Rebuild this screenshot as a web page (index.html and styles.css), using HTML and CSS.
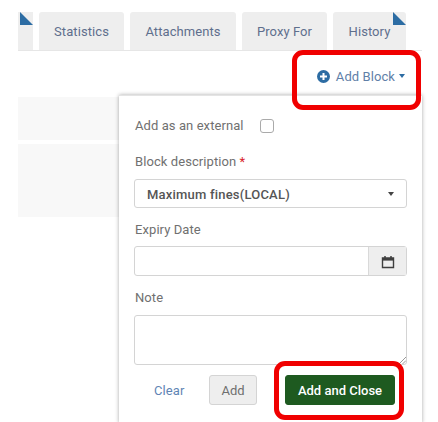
FILE: index.html
```html
<!DOCTYPE html>
<html lang="en">

<head>
    <meta charset="UTF-8">
    <title>Add Block</title>
    <link rel="stylesheet" href="styles.css">
</head>

<body>
    <div class="page">
        <div class="tabs">
            <div class="tab tab-stub"><span class="corner"></span></div>
            <div class="tab tab-stats">Statistics</div>
            <div class="tab tab-attach">Attachments</div>
            <div class="tab tab-proxy">Proxy For</div>
            <div class="tab tab-history">History<span class="corner"></span></div>
        </div>

        <div class="actions">
            <a class="add-block">
                <svg class="plus" viewBox="0 0 13 13" width="13" height="13">
                    <circle cx="6.5" cy="6.5" r="6.5" fill="#2c6ca3" />
                    <path d="M6.5 3v7M3 6.500h7" stroke="#fff" stroke-width="2" />
                </svg>
                Add Block
                <span class="caret caret-blue"></span>
            </a>
        </div>

        <div class="row-bg row-one"></div>
        <div class="row-bg row-two"></div>

        <div class="popover">
            <div class="external">
                <span class="label">Add as an external</span>
                <span class="checkbox"></span>
            </div>

            <div class="label desc-label">Block description <span class="required">*</span></div>
            <div class="select">
                <span>Maximum fines(LOCAL)</span>
                <span class="caret"></span>
            </div>

            <div class="label expiry-label">Expiry Date</div>
            <div class="date-field">
                <div class="date-input"></div>
                <div class="date-btn">
                    <svg viewBox="0 0 14 14" width="14" height="14">
                        <path d="M1.5 3h11v9.5h-11z" fill="none" stroke="#3f3f3f" stroke-width="1.4" />
                        <path d="M1.5 3h11v2.6h-11z" fill="#3f3f3f" />
                        <path d="M4 1v2.5M10 1v2.5" stroke="#3f3f3f" stroke-width="1.5" />
                    </svg>
                </div>
            </div>

            <div class="label note-label">Note</div>
            <div class="note">
                <svg class="grip" viewBox="0 0 8 8" width="8" height="8">
                    <path d="M1 8l7-7M4.5 8l3.500-3.500" stroke="#999" stroke-width="1" />
                </svg>
            </div>

            <div class="buttons">
                <a class="clear">Clear</a>
                <button class="btn">Add</button>
                <button class="btn btn-primary">Add and Close</button>
            </div>
        </div>

        <div class="highlight highlight-top"></div>
        <div class="highlight highlight-bottom"></div>
    </div>
</body>

</html>
```

FILE: styles.css
```css
html,
body {
    margin: 0;
    height: 100%;
    overflow: hidden;
    background: #fff;
}

.page {
    position: relative;
    box-sizing: border-box;
    height: 422px;
    padding-top: 12px;
    font-family: Roboto, "Liberation Sans", sans-serif;
    font-size: 13px;
    letter-spacing: 0.08px;
    color: #666;
}

.tabs {
    display: flex;
    gap: 6px;
    height: 38px;
    margin: 0 16px 0 18px;
    border-bottom: 1px solid #e6e6e6;
}

.tab {
    position: relative;
    display: flex;
    align-items: center;
    justify-content: center;
    height: 38px;
    background: #eeeeee;
    border-radius: 3px 3px 0 0;
    color: #5f6f8d;
}

.tab-stub {
    width: 15px;
    border-radius: 0;
}

.tab-stats {
    width: 85px;
}

.tab-attach {
    width: 106px;
}

.tab-proxy {
    width: 85px;
}

.tab-history {
    width: 73px;
}

.corner {
    position: absolute;
    top: 0;
    right: 0;
    width: 0;
    height: 0;
    border-right: 13px solid transparent;
    border-bottom: 13px solid #2c6ca3;
}

.actions {
    display: flex;
    justify-content: flex-end;
    height: 44px;
    padding-right: 33px;
}

.add-block {
    display: flex;
    align-items: center;
    gap: 6px;
    height: 50px;
    color: #5f7fa8;
}

.plus {
    flex: none;
}

.caret {
    display: inline-block;
    width: 0;
    height: 0;
    border-left: 3.500px solid transparent;
    border-right: 3.500px solid transparent;
    border-top: 4px solid #444;
}

.caret-blue {
    margin-left: -2px;
    border-top-color: #2c6ca3;
}

.row-bg {
    position: absolute;
    left: 18px;
    width: 110px;
    background: #f8f8f8;
}

.row-one {
    top: 97px;
    height: 43px;
}

.row-two {
    top: 144px;
    height: 73px;
}

.popover {
    position: absolute;
    top: 95px;
    left: 119px;
    width: 273px;
    height: 327px;
    padding: 0 15px;
    background: #fff;
    border-top: 1px solid #e4e4e4;
    box-shadow: 0 0 4px rgba(0, 0, 0, 0.35);
}

.label {
    padding-left: 1px;
    line-height: 16px;
    color: #707070;
}

.external {
    display: flex;
    align-items: center;
    gap: 16px;
    height: 18px;
    margin-top: 21px;
}

.checkbox {
    width: 12px;
    height: 12px;
    border: 1px solid #aaa;
    border-radius: 3px;
    background: #fff;
}

.desc-label {
    margin-top: 19px;
}

.required {
    color: #d8232a;
}

.select {
    display: flex;
    align-items: center;
    justify-content: space-between;
    box-sizing: border-box;
    height: 29px;
    margin-top: 9px;
    padding: 1px 12px 0;
    border: 1px solid #d4d4d4;
    border-radius: 3px;
    font-weight: 500;
    letter-spacing: 0.2px;
    color: #555;
}

.expiry-label {
    margin-top: 14px;
}

.date-field {
    display: flex;
    box-sizing: border-box;
    height: 30px;
    margin-top: 8px;
    border: 1px solid #d4d4d4;
    border-radius: 3px;
}

.date-input {
    flex: 1;
}

.date-btn {
    display: flex;
    align-items: center;
    justify-content: center;
    width: 37px;
    padding-top: 2px;
    background: #eeeeee;
    border-left: 1px solid #d9d9d9;
}

.note-label {
    margin-top: 14px;
}

.note {
    position: relative;
    box-sizing: border-box;
    height: 50px;
    margin-top: 9px;
    border: 1px solid #d4d4d4;
    border-radius: 3px;
}

.grip {
    position: absolute;
    right: 0;
    bottom: 0;
}

.buttons {
    display: flex;
    align-items: center;
    margin-top: 10px;
    padding-left: 20px;
}

.clear {
    width: 30px;
    margin-right: 25px;
    color: #5f85b5;
}

.btn {
    box-sizing: border-box;
    width: 48px;
    height: 30px;
    padding: 0;
    background: #eeeeee;
    border: 1px solid #d4d4d4;
    border-radius: 3px;
    font: inherit;
    color: #6f6f6f;
}

.btn-primary {
    width: 110px;
    margin-left: 28px;
    background: #1e5a20;
    border-color: #1e5a20;
    font-weight: 500;
    color: #fff;
}

.highlight {
    position: absolute;
    box-sizing: border-box;
    border: 5px solid #f00000;
    border-radius: 11px;
}

.highlight-top {
    top: 50px;
    left: 292px;
    width: 129px;
    height: 60px;
}

.highlight-bottom {
    top: 361px;
    left: 274px;
    width: 130px;
    height: 59px;
}
```
